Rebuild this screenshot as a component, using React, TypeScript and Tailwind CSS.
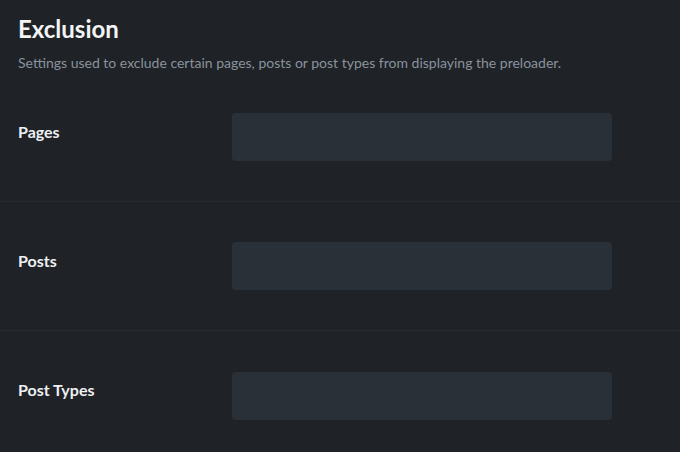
const rows = ['Pages', 'Posts', 'Post Types'];

const App = () => {
  return (
    <div className="w-[680px] h-[452px] overflow-hidden bg-[#1f2227] font-['Lato',sans-serif]">
      <div className="px-[18px] pt-[14px] pb-[1px]">
        <h1 className="text-[24px] leading-[30px] font-bold text-[#f3f4f5]">Exclusion</h1>
        <p className="mt-[10px] text-[14px] leading-[18px] text-[#8a939c]">
          Settings used to exclude certain pages, posts or post types from displaying the preloader.
        </p>
      </div>

      <div>
        {rows.map((label, i) => (
          <div
            key={label}
            className={`flex items-center h-[129px] px-[18px] ${i < rows.length - 1 ? 'border-b border-[#282c32]' : ''}`}
          >
            <div className="w-[214px] text-[16px] font-bold text-[#eef0f2] -mt-[11px]">{label}</div>
            <div className="w-[380px] h-[48px] rounded-[4px] bg-[#2a3038]" />
          </div>
        ))}
      </div>
    </div>
  );
};

export default App;
